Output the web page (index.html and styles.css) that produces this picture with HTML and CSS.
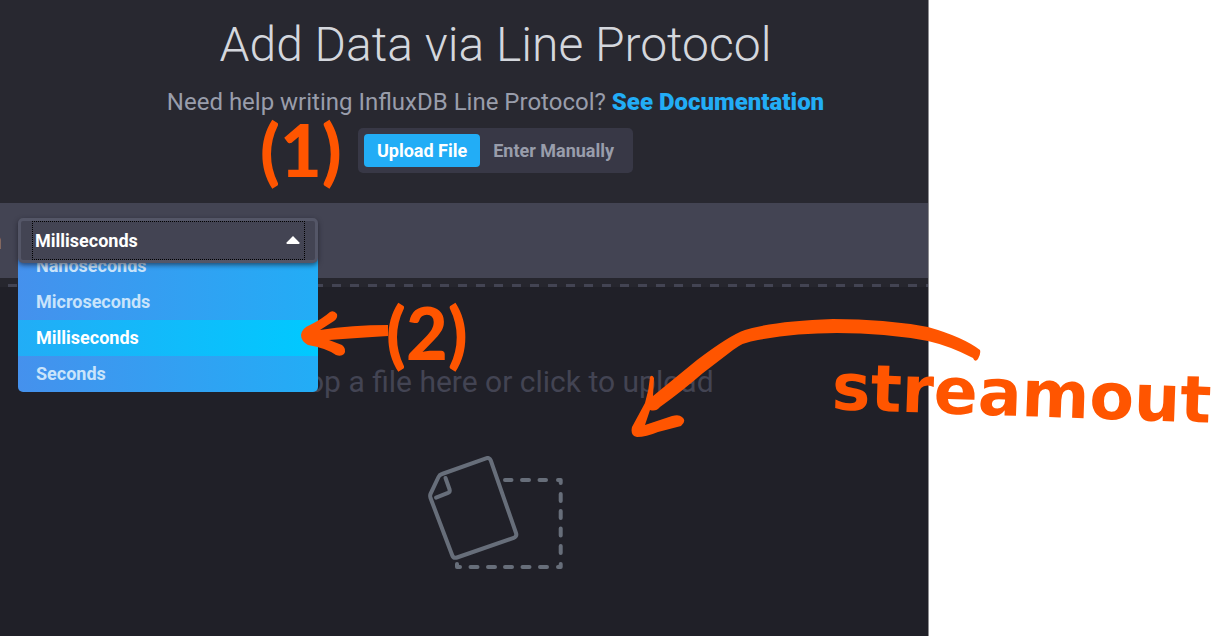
FILE: index.html
```html
<!DOCTYPE html>
<html lang="en">
<head>
<meta charset="utf-8">
<title>Add Data via Line Protocol</title>
<link rel="stylesheet" href="styles.css">
</head>
<body>
<div class="page">
  <main class="wizard">
    <header class="heading">
      <h1 class="title">Add Data via Line Protocol</h1>
      <p class="help">Need help writing InfluxDB Line Protocol? <a class="help-link" href="#docs">See Documentation</a></p>
      <div class="tabs">
        <button class="tab tab-active" type="button">Upload File</button>
        <button class="tab" type="button">Enter Manually</button>
      </div>
    </header>
    <div class="toolbar">
      <label class="precision" for="precision">Precision</label>
      <div class="dropdown">
        <div class="dropdown-head">
          <select class="dropdown-select" id="precision">
            <option>Nanoseconds</option>
            <option>Microseconds</option>
            <option selected>Milliseconds</option>
            <option>Seconds</option>
          </select>
          <svg class="caret" viewBox="0 0 14 8" aria-hidden="true"><path d="M7 0 L13.4 6.4 Q14 8 12.6 8 H1.4 Q0 8 .6 6.4 Z"/></svg>
        </div>
        <div class="menu">
          <button class="item" type="button">Nanoseconds</button>
          <button class="item" type="button">Microseconds</button>
          <button class="item item-active" type="button">Milliseconds</button>
          <button class="item" type="button">Seconds</button>
        </div>
      </div>
    </div>
    <section class="dropzone">
      <p class="drop-text">Drop a file here or click to upload</p>
      <svg class="drop-icon" viewBox="428 456 136 114" aria-hidden="true">
        <path d="M442 474 L486 458.3 Q489.500 457 490.800 460.500 L516 533 Q517.200 536.500 513.700 537.800 L457 557.500 Q453.500 558.700 452.200 555.200 L430.500 498 Q429.700 495.500 430.700 493.500 L438.500 477 Q439.500 474.800 442 474 Z"/>
        <path d="M445.500 478 L449.600 489.500 Q450.300 491.800 448 492.800 L436 497.600"/>
        <path d="M505 480 H511.500 M522 480 H529 M539.500 480 H546 M558 480 H560.700 V483 M560.700 494 V501 M560.700 511 V518 M560.700 528.500 V535.500 M560.700 546 V553 M560.700 564 V567 H558 M547 567 H540 M529.500 567 H522.500 M512 567 H505 M495 567 H488 M477.500 567 H470.500 M460 567 H457 V564"/>
      </svg>
    </section>
  </main>
  <aside class="margin"></aside>
  <svg class="arrows" viewBox="0 0 1216 636" aria-hidden="true">
    <path d="M301 335 Q302 328 310 325 Q322 319 330 312 Q334 310 337 314 Q338 318 334 321 L320 330 Q352 325 388 325 V336 Q356 338 329 340 L342 345 Q347 349 344 354 Q341 357 336 355 Q326 348 308 345 Q301 341 301 335 Z"/>
    <path d="M980 350 Q963 337 928 327 Q885 319 833 319 Q774 321 745 330 Q730 335 697 360 L653 396 L654 378 Q652 374 650 377 Q649 390 645 403 L632 427 Q630 436 637 437 Q646 437 658 432 L681 426 Q687 421 682 417 Q679 414 672 416 L645 425 L650 410 Q656 412 660 407 Q681 392 703 373 L733 350 Q743 342 758 340 Q795 333 837 333 Q885 333 928 341 Q950 346 973 358 Q975 363 978 359 Q981 354 980 350 Z"/>
  </svg>
  <span class="note note-one">(1)</span>
  <span class="note note-two">(2)</span>
  <span class="note note-source">streamout</span>
</div>
</body>
</html>
```
FILE: styles.css
```css
* { box-sizing: border-box; }

body {
  margin: 0;
  background: #fff;
  font-family: Roboto, "Liberation Sans", sans-serif;
}

button, select { font: inherit; }

.page {
  position: relative;
  display: grid;
  grid-template-columns: 929fr 287fr;
  min-height: 100vh;
  overflow: hidden;
}

.wizard {
  display: flex;
  flex-direction: column;
  background: #202028;
  border-right: 1px solid #8e8e92;
}

.heading {
  display: flex;
  flex-direction: column;
  align-items: center;
  padding: 17px 0 30px 63px;
  background: #282830;
}

.title {
  margin: 0;
  color: #d4d7dd;
  font-size: 48px;
  font-weight: 300;
  line-height: 56px;
}

.help {
  margin: 15px 0 12px;
  color: #999dab;
  font-size: 24px;
  line-height: 28px;
}

.help-link {
  color: #22adf6;
  font-weight: 900;
  text-decoration: none;
}

.tabs {
  display: flex;
  padding: 6px;
  border-radius: 5px;
  background: #383846;
}

.tab {
  padding: 0 13px;
  border: 0;
  border-radius: 4px;
  background: none;
  color: #999dab;
  font-size: 18px;
  font-weight: 700;
  line-height: 33px;
}

.tab-active {
  background: #22adf6;
  color: #fff;
}

.toolbar {
  display: flex;
  align-items: center;
  gap: 16px;
  padding: 15px 0;
  background: #434453;
}

.precision {
  display: flex;
  justify-content: flex-end;
  width: 2px;
  overflow: hidden;
  color: #999dab;
  font-size: 24px;
  line-height: 28px;
}

.dropdown {
  position: relative;
  width: 300px;
}

.dropdown-head {
  position: relative;
  z-index: 2;
  display: flex;
  padding: 0 10px 0 11px;
  border: 3px solid #545667;
  border-radius: 5px;
  background: #434453;
  box-shadow: 0 2px 5px rgba(20, 20, 30, 0.6);
}

.dropdown-select {
  flex: 1;
  height: 39px;
  padding: 0 3px;
  border: 0;
  outline: 1px dotted #000;
  outline-offset: -1px;
  appearance: none;
  background: none;
  color: #fff;
  font-size: 18px;
  font-weight: 700;
}

.caret {
  position: absolute;
  top: 15px;
  right: 15px;
  width: 14px;
  height: 8px;
  fill: #fff;
}

.menu {
  position: absolute;
  z-index: 1;
  top: 30px;
  left: 0;
  display: flex;
  flex-direction: column;
  width: 100%;
  overflow: hidden;
  border-radius: 5px;
}

.item {
  padding: 0 18px;
  border: 0;
  background: linear-gradient(90deg, #4591ed, #22adf6);
  color: #c9e4fb;
  font-size: 18px;
  font-weight: 700;
  line-height: 36px;
  text-align: left;
}

.item-active {
  background: linear-gradient(90deg, #22adf6, #00c9ff);
  color: #fff;
}

.dropzone {
  display: flex;
  flex: 1;
  flex-direction: column;
  align-items: center;
  padding: 86px 0 0 63px;
  background:
    repeating-linear-gradient(90deg, #434453 0 9px, transparent 9px 18px) 8px 6px / 100% 3px no-repeat,
    linear-gradient(#26262e, #26262e) 0 0 / 100% 9px no-repeat;
}

.drop-text {
  margin: 0;
  color: #434453;
  font-size: 30px;
  line-height: 36px;
}

.drop-icon {
  width: 136px;
  height: 114px;
  margin-top: 56px;
  fill: none;
  stroke: #676e7a;
  stroke-width: 4;
  stroke-linecap: round;
  stroke-linejoin: round;
}

/* Hand annotations laid over the page */
.arrows {
  position: absolute;
  z-index: 3;
  top: 0;
  left: 0;
  width: 1216px;
  height: 636px;
  fill: #ff5500;
  pointer-events: none;
}

.note {
  position: absolute;
  z-index: 3;
  color: #ff5500;
  font-family: Lato, sans-serif;
  font-size: 72px;
  font-weight: 900;
  line-height: 72px;
  white-space: nowrap;
}

.note-one {
  top: 113px;
  left: 260px;
}

.note-two {
  top: 296px;
  left: 386px;
}

.note-source {
  top: 358px;
  left: 832px;
  font-family: "DejaVu Sans", sans-serif;
  font-size: 65px;
  font-weight: 700;
  transform: rotate(2deg);
}
```
